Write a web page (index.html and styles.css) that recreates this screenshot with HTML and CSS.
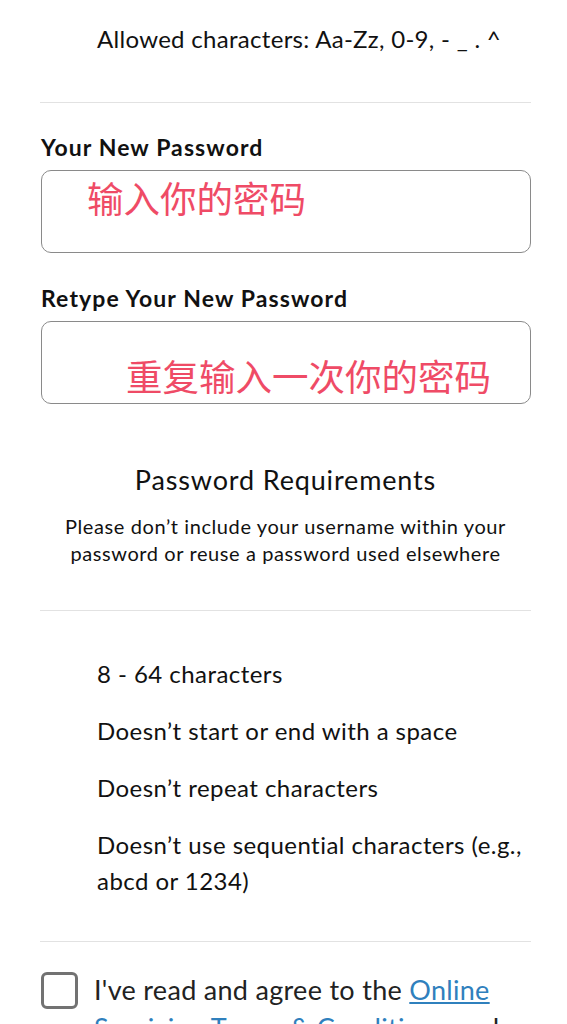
FILE: index.html
```html
<!DOCTYPE html>
<html lang="en">
<head>
<meta charset="utf-8">
<title>New Password</title>
<link rel="stylesheet" href="styles.css">
</head>
<body>
<main class="page">
  <p class="allowed">Allowed characters: Aa-Zz, 0-9, - _ . ^</p>
  <hr class="divider divider-top">

  <label class="field-label first-label">Your New Password</label>
  <div class="input-box box-one"><span class="hint">输入你的密码</span></div>

  <label class="field-label second-label">Retype Your New Password</label>
  <div class="input-box box-two"><span class="hint">重复输入一次你的密码</span></div>

  <h2 class="req-title">Password Requirements</h2>
  <p class="req-note">Please don’t include your username within your password or reuse a password used elsewhere</p>
  <hr class="divider divider-mid">

  <ul class="req-list">
    <li>8 - 64 characters</li>
    <li>Doesn’t start or end with a space</li>
    <li>Doesn’t repeat characters</li>
    <li>Doesn’t use sequential characters (e.g., abcd or 1234)</li>
  </ul>
  <hr class="divider divider-bottom">

  <div class="agree">
    <span class="checkbox"></span>
    <p class="agree-text">I've read and agree to the <a href="#" class="link">Online Servicing Terms &amp; Conditions</a> and</p>
  </div>
</main>
</body>
</html>
```

FILE: styles.css
```css
html, body {
  margin: 0;
  padding: 0;
  background: #ffffff;
}

body {
  font-family: "Lato", "Noto Sans", "Noto Sans CJK SC", sans-serif;
  color: #111111;
  overflow: hidden;
}

.page {
  padding: 0 36px 0 40px;
}

.allowed {
  margin: 24px 0 0 57px;
  font-size: 24px;
  line-height: 30px;
  letter-spacing: 0.3px;
}

.divider {
  border: 0;
  height: 1px;
  background: #e2e2e2;
  margin: 0;
}

.divider-top {
  margin-top: 48px;
}

.field-label {
  display: block;
  font-size: 23px;
  font-weight: 700;
  line-height: 28px;
  letter-spacing: 1.1px;
  padding-left: 1px;
}

.first-label {
  margin-top: 30px;
}

.second-label {
  margin-top: 31px;
}

.input-box {
  box-sizing: border-box;
  margin-top: 9px;
  height: 83px;
  border: 1.5px solid #8a8a8a;
  border-radius: 10px;
  margin-left: 1px;
}

.hint {
  display: block;
  font-family: "Noto Sans CJK SC", sans-serif;
  font-size: 36.5px;
  line-height: 36px;
  color: #ef4b66;
}

.box-one .hint {
  padding: 9px 0 0 45px;
}

.box-two .hint {
  padding: 36px 0 0 84px;
}

.req-title {
  margin: 59px 0 0;
  text-align: center;
  font-size: 27px;
  font-weight: 400;
  line-height: 33px;
  letter-spacing: 0.85px;
}

.req-note {
  margin: 17px 0 0;
  text-align: center;
  font-size: 20px;
  line-height: 27px;
  letter-spacing: 0.6px;
}

.divider-mid {
  margin-top: 43px;
}

.req-list {
  list-style: none;
  margin: 45px 0 0;
  padding: 0 0 0 57px;
  display: flex;
  flex-direction: column;
  gap: 21px;
}

.req-list li {
  font-size: 24px;
  line-height: 36px;
  letter-spacing: 0.45px;
}

.divider-bottom {
  margin-top: 42px;
}

.agree {
  display: flex;
  align-items: flex-start;
  gap: 16px;
  margin-top: 29px;
  padding-left: 1px;
}

.checkbox {
  flex: none;
  box-sizing: border-box;
  width: 37px;
  height: 37px;
  margin-top: 1px;
  border: 3px solid #727272;
  border-radius: 6px;
}

.agree-text {
  margin: 0;
  font-size: 27px;
  line-height: 38px;
  letter-spacing: 0.3px;
  color: #222222;
}

.link {
  color: #2f80bd;
  text-decoration: underline;
}
```
